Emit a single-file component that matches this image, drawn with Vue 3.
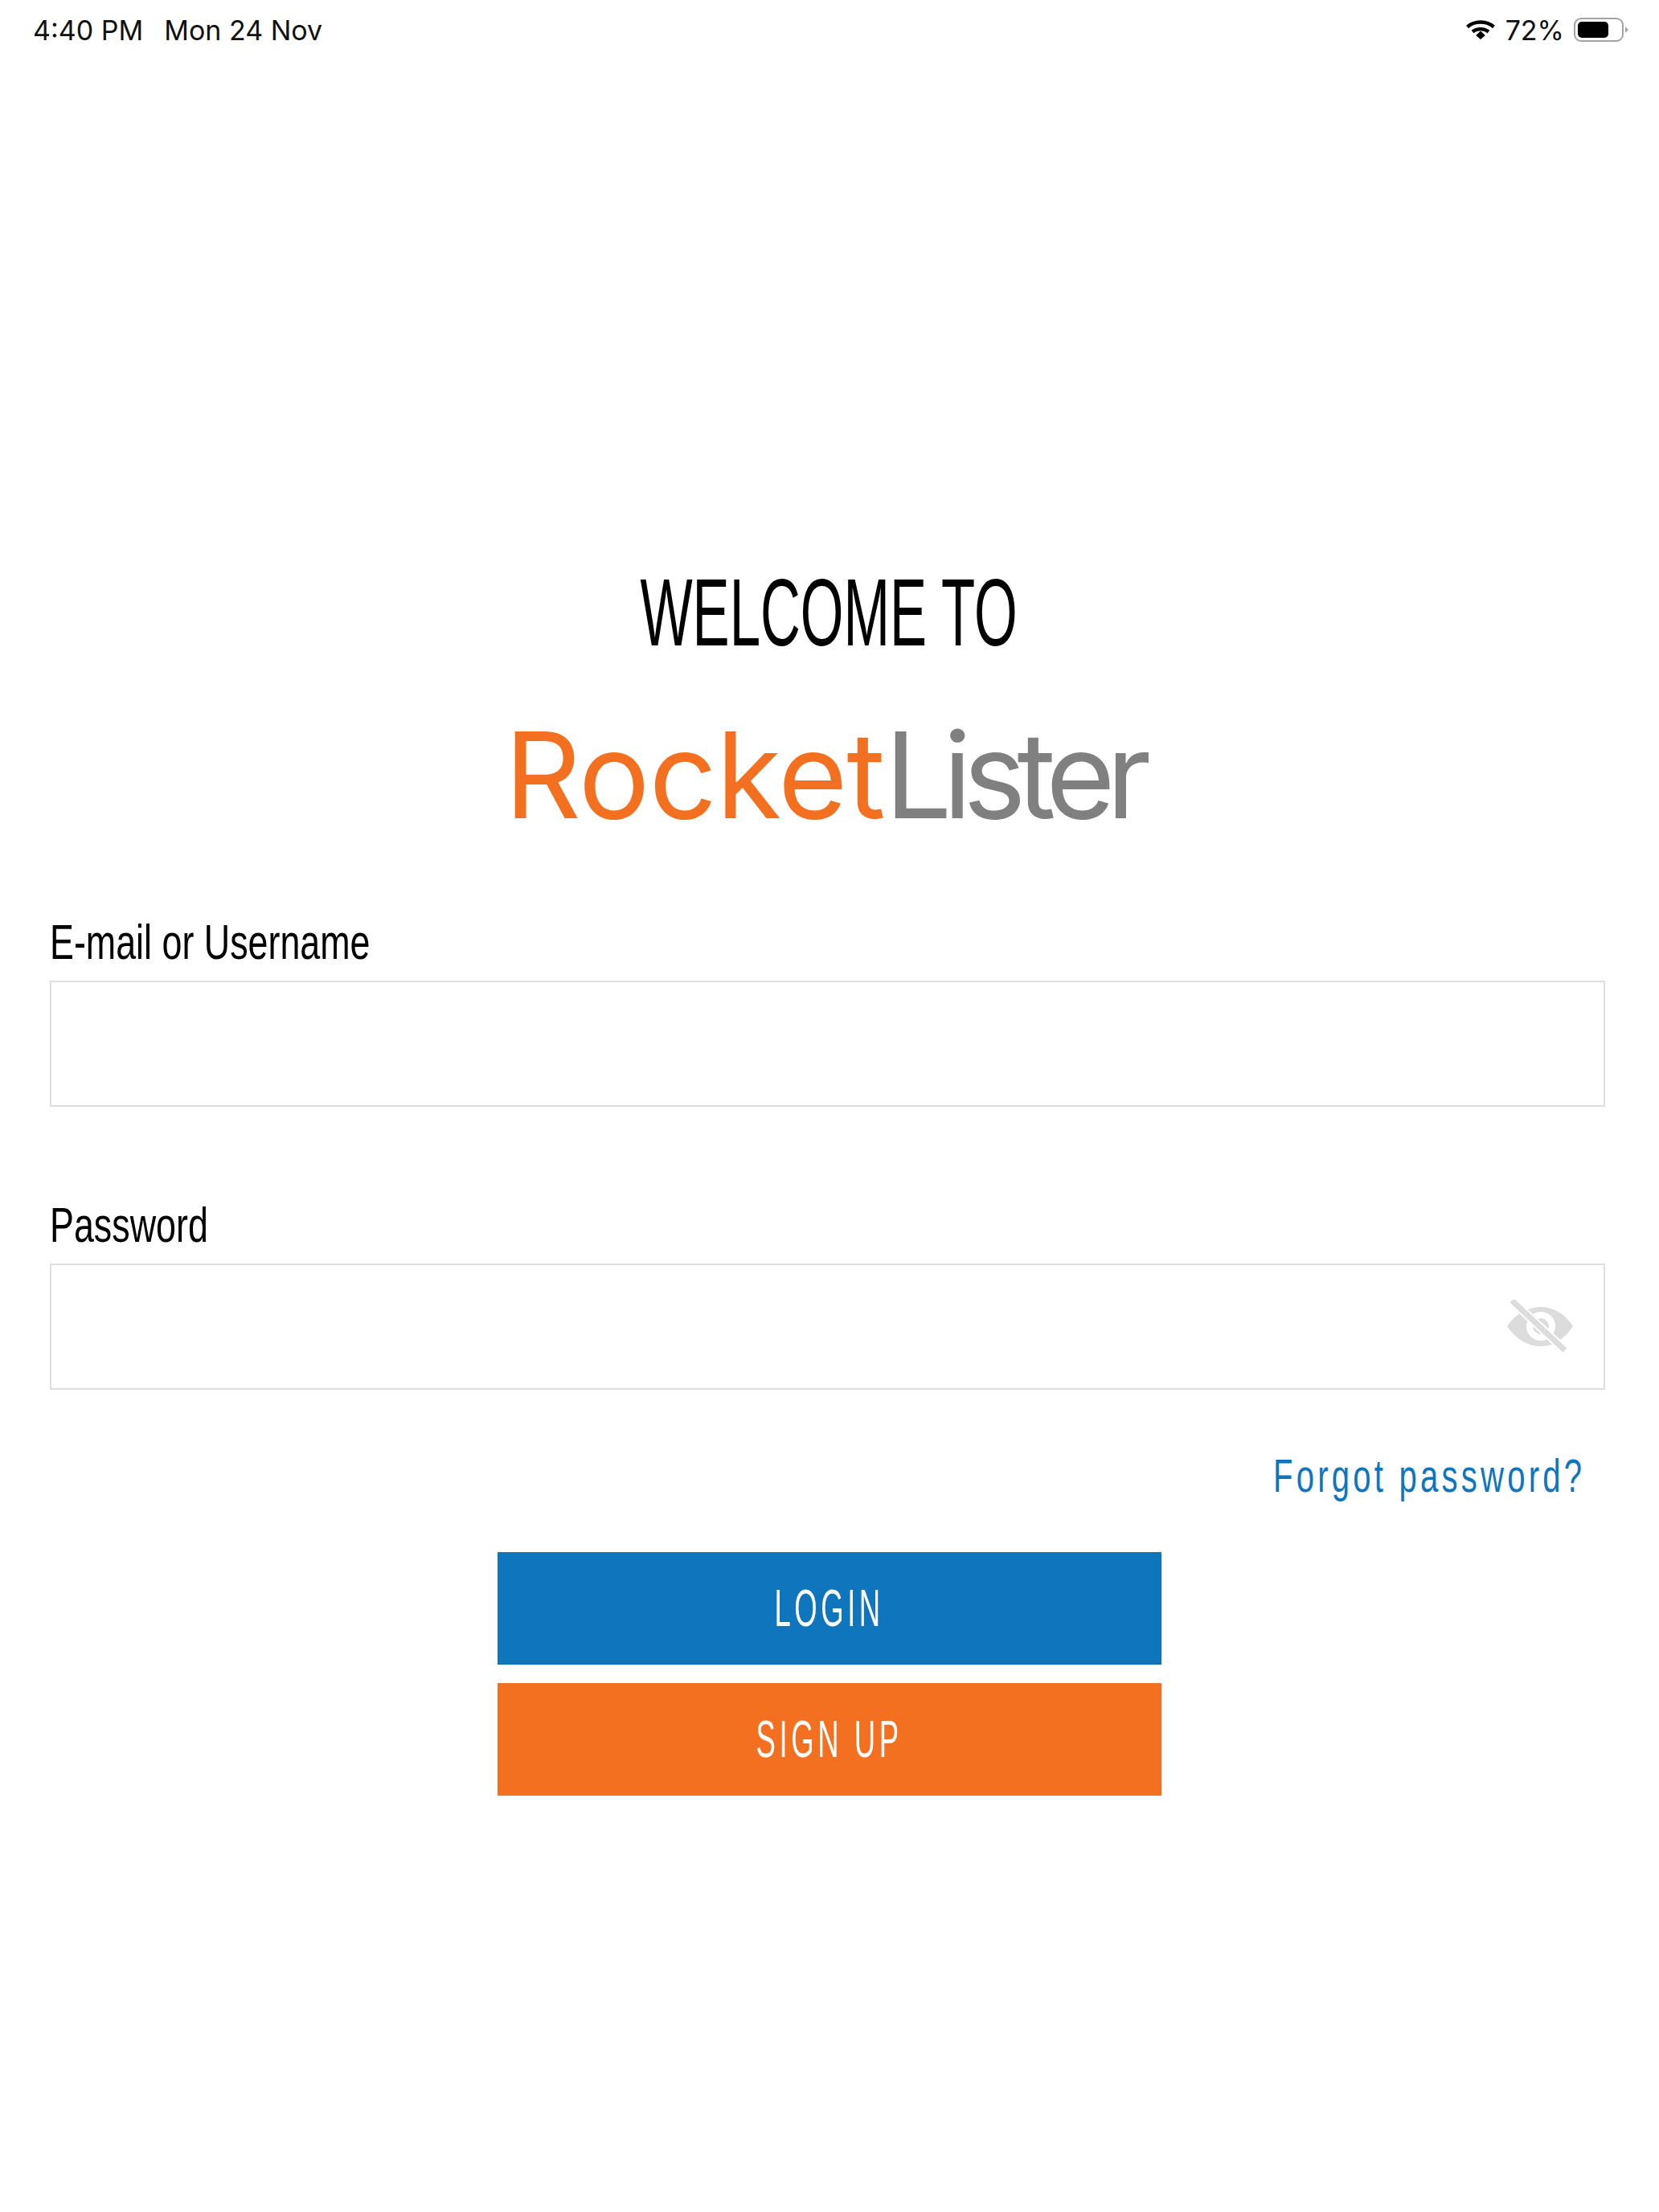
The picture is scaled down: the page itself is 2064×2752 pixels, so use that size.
<template>
  <div class="login-page">
    <div class="status-bar">
      <div class="status-left">
        <span class="time">4:40 PM</span>
        <span class="date">Mon 24 Nov</span>
      </div>
      <div class="status-right">
        <svg class="wifi" width="38" height="24" viewBox="0 0 38 24">
          <path d="M2.5 8.5C11.5 .5 26.5 .5 35.5 8.5" fill="none" stroke="#000" stroke-width="4.4" />
          <path d="M9 14.5C14.5 10 23.5 10 29 14.5" fill="none" stroke="#000" stroke-width="4.4" />
          <path d="M13.2 19 19 13.6 24.8 19 19 24Z" fill="#000" />
        </svg>
        <span class="percent">72%</span>
        <svg class="battery" width="68" height="30" viewBox="0 0 68 30">
          <rect x="1" y="1" width="60" height="28" rx="8" fill="none" stroke="#a3a3a3" stroke-width="2" />
          <rect x="5" y="5" width="38" height="20" rx="5" fill="#000" />
          <path d="M64 11 68 15 64 19Z" fill="#a3a3a3" />
        </svg>
      </div>
    </div>

    <main class="content">
      <h1 class="welcome"><span>WELCOME TO</span></h1>

      <div class="logo"><span class="rocket">Rocket</span><span class="lister">Lister</span></div>

      <label class="field-label"><span>E-mail or Username</span></label>
      <div class="input-box">
        <input type="text" class="text-input">
      </div>

      <label class="field-label second"><span>Password</span></label>
      <div class="input-box">
        <input type="password" class="text-input">
        <svg class="eye" width="86" height="66" viewBox="0 0 86 66">
          <path d="M2 33C12 18 27 9 44 9C60 9 74 18 84 33C74 48 60 58 44 58C27 58 12 48 2 33Z" fill="#dcdcdc" />
          <circle cx="44" cy="33" r="18" fill="#fff" />
          <circle cx="44" cy="33" r="10" fill="#dcdcdc" />
          <path d="M8 1 74 63" stroke="#fff" stroke-width="11" />
          <path d="M8 1 74 63" stroke="#dcdcdc" stroke-width="7" />
        </svg>
      </div>

      <div class="forgot-row">
        <a class="forgot"><span>Forgot password?</span></a>
      </div>

      <div class="actions">
        <button class="btn btn-login"><span>LOGIN</span></button>
        <button class="btn btn-signup"><span>SIGN UP</span></button>
      </div>
    </main>
  </div>
</template>

<script setup>
</script>

<style>
body {
  margin: 0;
  background: #ffffff;
}
</style>

<style scoped>
.login-page {
  height: 2752px;
  background: #ffffff;
  font-family: "Liberation Sans", Arial, sans-serif;
  color: #000000;
  overflow: hidden;
}

/* status bar */
.status-bar {
  display: flex;
  justify-content: space-between;
  align-items: center;
  height: 74px;
  padding: 0 38px 0 41px;
  font-family: Inter, "Liberation Sans", sans-serif;
  font-size: 34px;
  color: #111111;
}

.status-left {
  display: flex;
  gap: 26px;
}

.status-right {
  display: flex;
  align-items: center;
  gap: 12px;
}

/* main column */
.content {
  padding: 0 67px 0 62px;
}

.welcome {
  margin: 628px 0 0;
  padding-left: 4px;
  height: 120px;
  line-height: 120px;
  font-size: 118px;
  font-weight: 400;
  text-align: center;
}

.welcome span {
  display: inline-block;
  transform: scaleX(0.585);
  white-space: nowrap;
}

.logo {
  margin-top: 83px;
  padding-right: 10px;
  height: 120px;
  line-height: 120px;
  font-family: Inter, sans-serif;
  font-size: 148px;
  font-weight: 400;
  text-align: center;
  white-space: nowrap;
}

.rocket {
  color: #f37021;
  letter-spacing: -1px;
}

.lister {
  color: #808080;
  letter-spacing: -11px;
}

.field-label {
  display: block;
  margin: 117px 0 18px;
  height: 60px;
  line-height: 60px;
  font-size: 62px;
}

.field-label.second {
  margin-top: 117px;
}

.field-label span {
  display: inline-block;
  transform: scaleX(0.723);
  transform-origin: left center;
  white-space: nowrap;
}

.input-box {
  position: relative;
  box-sizing: border-box;
  height: 157px;
  border: 2px solid #dedede;
}

.text-input {
  box-sizing: border-box;
  width: 100%;
  height: 100%;
  border: none;
  outline: none;
  background: transparent;
}

.eye {
  position: absolute;
  right: 36px;
  top: 43px;
}

.forgot-row {
  display: flex;
  justify-content: flex-end;
  margin-top: 77px;
  padding-right: 25px;
  height: 60px;
  line-height: 60px;
  font-size: 57px;
}

.forgot {
  color: #0f75bd;
  letter-spacing: 6px;
}

.forgot span {
  display: inline-block;
  transform: scaleX(0.703);
  transform-origin: right center;
  white-space: nowrap;
}

.actions {
  display: flex;
  flex-direction: column;
  align-items: center;
  gap: 23px;
  margin-top: 65px;
  padding-left: 5px;
}

.btn {
  width: 826px;
  height: 140px;
  padding: 0;
  border: none;
  color: #ffffff;
  font-family: inherit;
  font-size: 64px;
  letter-spacing: 8px;
}

.btn span {
  display: inline-block;
  transform: scaleX(0.57);
  white-space: nowrap;
}

.btn-login {
  background: #0f75bd;
}

.btn-signup {
  background: #f37021;
}
</style>
